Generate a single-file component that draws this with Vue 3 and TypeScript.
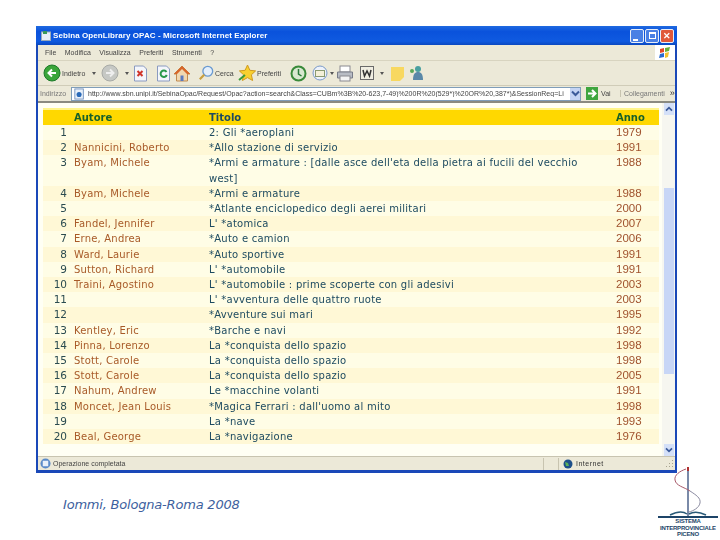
<script setup lang="ts">
interface Row { n: number; a: string; t: string; y: string }
const rows: Row[] = [
  { n: 1, a: '', t: '2: Gli *aeroplani', y: '1979' },
  { n: 2, a: 'Nannicini, Roberto', t: '*Allo stazione di servizio', y: '1991' },
  { n: 3, a: 'Byam, Michele', t: "*Armi e armature : [dalle asce dell'eta della pietra ai fucili del vecchio west]", y: '1988' },
  { n: 4, a: 'Byam, Michele', t: '*Armi e armature', y: '1988' },
  { n: 5, a: '', t: '*Atlante enciclopedico degli aerei militari', y: '2000' },
  { n: 6, a: 'Fandel, Jennifer', t: "L' *atomica", y: '2007' },
  { n: 7, a: 'Erne, Andrea', t: '*Auto e camion', y: '2006' },
  { n: 8, a: 'Ward, Laurie', t: '*Auto sportive', y: '1991' },
  { n: 9, a: 'Sutton, Richard', t: "L' *automobile", y: '1991' },
  { n: 10, a: 'Traini, Agostino', t: "L' *automobile : prime scoperte con gli adesivi", y: '2003' },
  { n: 11, a: '', t: "L' *avventura delle quattro ruote", y: '2003' },
  { n: 12, a: '', t: '*Avventure sui mari', y: '1995' },
  { n: 13, a: 'Kentley, Eric', t: '*Barche e navi', y: '1992' },
  { n: 14, a: 'Pinna, Lorenzo', t: 'La *conquista dello spazio', y: '1998' },
  { n: 15, a: 'Stott, Carole', t: 'La *conquista dello spazio', y: '1998' },
  { n: 16, a: 'Stott, Carole', t: 'La *conquista dello spazio', y: '2005' },
  { n: 17, a: 'Nahum, Andrew', t: 'Le *macchine volanti', y: '1991' },
  { n: 18, a: 'Moncet, Jean Louis', t: "*Magica Ferrari : dall'uomo al mito", y: '1998' },
  { n: 19, a: '', t: 'La *nave', y: '1993' },
  { n: 20, a: 'Beal, George', t: 'La *navigazione', y: '1976' },
]
const menu = ['File', 'Modifica', 'Visualizza', 'Preferiti', 'Strumenti', '?']
const url = 'http://www.sbn.unipi.it/SebinaOpac/Request/Opac?action=search&Class=CUBm%3B%20-623,7-49)%200R%20(529*)%20OR%20,387*)&SessionReq=Li'
</script>

<template>
  <div class="slide">
    <div class="win">
      <div class="titlebar">
        <svg class="ti" width="10" height="11" viewBox="0 0 10 11"><rect x=".5" y="2" width="9" height="8.500" fill="#e8eef8" stroke="#9ab"/><rect x="2" y="1" width="4" height="3" fill="#3a9a5a"/></svg>
        <span class="ttext">Sebina OpenLibrary OPAC - Microsoft Internet Explorer</span>
        <div class="wbtns">
          <span class="wb"><i class="mn"></i></span>
          <span class="wb"><i class="mx"></i></span>
          <span class="wb close">✕</span>
        </div>
      </div>
      <div class="inner">
        <div class="menubar">
          <span v-for="m in menu" :key="m">{{ m }}</span>
          <div class="flag">
            <svg width="14" height="14" viewBox="0 0 14 14"><path d="M2 3l4-1 0 4-4 1z" fill="#e2482a"/><path d="M7 2l5-1-1 4-4 1z" fill="#6aae3a"/><path d="M2 8l4-1 0 4-5 1z" fill="#2a6ad0"/><path d="M7 7l4-1-1 5-3 1z" fill="#f2c230"/></svg>
          </div>
        </div>
        <div class="toolbar">
          <svg class="i m5" width="18" height="18" viewBox="0 0 18 18"><circle cx="9" cy="9" r="8" fill="#3aa53a" stroke="#1d7a2a"/><path d="M13 9H6M9 5.500L5.500 9 9 12.500" fill="none" stroke="#fff" stroke-width="2"/></svg>
          <span class="tl t1">Indietro</span>
          <span class="drop m4"></span>
          <svg class="i m5" width="18" height="18" viewBox="0 0 18 18"><circle cx="9" cy="9" r="8" fill="#c6c8c4" stroke="#a8aaa6"/><path d="M5 9h7M9 5.500L12.500 9 9 12.500" fill="none" stroke="#eee" stroke-width="2"/></svg>
          <span class="drop m6"></span>
          <svg class="i m4" width="15" height="17" viewBox="0 0 15 17"><path d="M1.500 1h9l3 3v12h-12z" fill="#f4f6fb" stroke="#8a9ac0"/><path d="M4.500 6l5 5M9.500 6l-5 5" stroke="#d0352a" stroke-width="2"/></svg>
          <svg class="i m8" width="15" height="17" viewBox="0 0 15 17"><path d="M1.500 1h9l3 3v12h-12z" fill="#f4f6fb" stroke="#8a9ac0"/><path d="M10.500 7a3.200 3.200 0 1 0 .3 3" fill="none" stroke="#2a9a4a" stroke-width="2"/></svg>
          <svg class="i m2" width="18" height="17" viewBox="0 0 18 17"><path d="M9 1L1 9h2.500v7h11V9H17z" fill="#f0d8b0" stroke="#c08a50"/><path d="M9 1L1 9h3l5-5 5 5h3z" fill="#d8662a"/><rect x="7.500" y="10.500" width="3" height="5.500" fill="#5a7ac0"/></svg>
          <svg class="i m7" width="16" height="18" viewBox="0 0 18 18"><circle cx="11" cy="7" r="5.500" fill="#e4effb" stroke="#6a9ad0" stroke-width="1.500"/><path d="M7 11l-5 5" stroke="#c8a040" stroke-width="2.500"/></svg>
          <span class="tl t2">Cerca</span>
          <svg class="i m5" width="19" height="18" viewBox="0 0 19 18"><path d="M9.500 1l2.400 5.300 5.700.6-4.200 3.900 1.200 5.700-5.100-2.900-5.100 2.900 1.200-5.700L1.400 6.900l5.700-.6z" fill="#f8d030" stroke="#d09a20"/><path d="M1 16l6-5" stroke="#3a9a3a" stroke-width="2"/></svg>
          <span class="tl t3">Preferiti</span>
          <svg class="i m6" width="17" height="17" viewBox="0 0 17 17"><circle cx="8.500" cy="8.500" r="7" fill="#d8e8d0" stroke="#3a8a3a" stroke-width="2"/><path d="M8.500 4v5l3 2" fill="none" stroke="#2a7a3a" stroke-width="1.500"/></svg>
          <svg class="i m5" width="17" height="17" viewBox="0 0 17 17"><circle cx="8" cy="8" r="7" fill="#eef2fa" stroke="#7a9ac8"/><rect x="3.500" y="5.500" width="9" height="6" fill="#f4f0d8" stroke="#8a9a70"/></svg>
          <span class="drop m1"></span>
          <svg class="i m2" width="18" height="17" viewBox="0 0 18 17"><rect x="4" y="1" width="10" height="6" fill="#fff" stroke="#8a8a90"/><path d="M1.500 7h15v6h-15z" fill="#b8bcc4" stroke="#787c88"/><rect x="4" y="11" width="10" height="5" fill="#f4f4f4" stroke="#8a8a90"/></svg>
          <svg class="i m6" width="14" height="14" viewBox="0 0 14 14"><rect x=".5" y=".5" width="13" height="13" fill="#f0eee2" stroke="#6a6a6a"/><path d="M3 4l1.500 6L7 5l2.500 5L11 4" fill="none" stroke="#333" stroke-width="1.500"/></svg>
          <span class="drop m6"></span>
          <svg class="i m7" width="13" height="15" viewBox="0 0 13 15"><path d="M0 1h13v10l-4 4H0z" fill="#f8d860"/></svg>
          <svg class="i m4" width="17" height="16" viewBox="0 0 17 16"><circle cx="10" cy="4" r="3" fill="#4aa0a0"/><path d="M5 15c0-6 2-8 5-8s5 2 5 8z" fill="#5a88a8"/><circle cx="4" cy="6" r="2" fill="#5aa85a"/></svg>
        </div>
        <div class="addr">
          <span class="alabel">Indirizzo</span>
          <div class="afield">
            <svg class="aicon" width="11" height="12" viewBox="0 0 13 13"><rect x="1" y=".5" width="10" height="12" fill="#e8f0fa" stroke="#6a8ab8"/><circle cx="6" cy="7" r="3" fill="#2a6ab8"/></svg>
            <span class="url">{{ url }}</span>
            <span class="combo"><svg width="9" height="7" viewBox="0 0 9 7"><path d="M1 1.500l3.500 3.500L8 1.500" fill="none" stroke="#3a5a9a" stroke-width="2"/></svg></span>
          </div>
          <svg class="go" width="12" height="13" viewBox="0 0 12 13"><rect width="12" height="13" fill="#3fa63f"/><path d="M2 6.500h7M6 3l3.500 3.500L6 10" fill="none" stroke="#fff" stroke-width="2"/></svg>
          <span class="vai">Vai</span>
          <span class="links">Collegamenti</span>
          <span class="more">»</span>
        </div>
        <div class="viewport">
          <div class="page">
            <div class="thead">
              <span class="cn"></span><span class="ca">Autore</span><span class="ct">Titolo</span><span class="cy">Anno</span>
            </div>
            <div v-for="r in rows" :key="r.n" class="row" :class="{ even: r.n % 2 === 0 }">
              <span class="cn">{{ r.n }}</span>
              <span class="ca">{{ r.a }}</span>
              <span class="ct">{{ r.t }}</span>
              <span class="cy">{{ r.y }}</span>
            </div>
          </div>
          <div class="scroll">
            <span class="sb"><svg width="8" height="6" viewBox="0 0 9 7"><path d="M1 5.500l3.500-3.500L8 5.500" fill="none" stroke="#3a5a9a" stroke-width="2"/></svg></span>
            <div class="track"><div class="thumb"></div></div>
            <span class="sb"><svg width="8" height="6" viewBox="0 0 9 7"><path d="M1 1.500l3.500 3.500L8 1.500" fill="none" stroke="#3a5a9a" stroke-width="2"/></svg></span>
          </div>
        </div>
        <div class="status">
          <svg width="11" height="11" viewBox="0 0 12 12"><circle cx="6" cy="6" r="5.500" fill="#5a8ac8"/><rect x="3" y="3" width="6" height="6" fill="#e8f0fa"/></svg>
          <span class="stext">Operazione completata</span>
          <div class="sright">
            <span class="sep"></span>
            <span class="sep s2"></span>
            <svg width="10" height="10" viewBox="0 0 10 10"><circle cx="5" cy="5" r="4.500" fill="#1d4f8a"/><path d="M2 3l3 1 1 3-3 0z" fill="#5ab05a"/></svg>
            <span class="inet">Internet</span>
            <svg class="grip" width="9" height="9" viewBox="0 0 9 9"><path d="M7 1h1v1H7zM4 4h1v1H4zM7 4h1v1H7zM1 7h1v1H1zM4 7h1v1H4zM7 7h1v1H7z" fill="#a8a490"/></svg>
          </div>
        </div>
      </div>
    </div>
    <p class="caption">Iommi, Bologna-Roma 2008</p>
    <div class="logo">
      <svg width="60" height="52" viewBox="0 0 60 52">
        <rect x="29" y="1" width="2" height="49" fill="#7a8aa8"/>
        <rect x="29" y="1" width="2" height="4" fill="#b03030"/>
        <path d="M28 3C22 5 16 9 17 14c1 6 9 7 15 11" fill="none" stroke="#a85a6a" stroke-width="1"/>
        <path d="M32 25c6 4 11 7 10 12-1 5-7 8-11 9" fill="none" stroke="#8a8aa0" stroke-width="1"/>
        <path d="M12 49c6-3 13-4 17-1M31 48c5-3 11-2 17 1" fill="none" stroke="#2a5a78" stroke-width="1.500"/>
        <rect x="0" y="50" width="60" height="2" fill="#1d4468"/>
      </svg>
      <div class="ltext">SISTEMA<br />INTERPROVINCIALE<br />PICENO</div>
    </div>
  </div>
</template>

<style scoped>
.slide { width: 720px; height: 540px; box-sizing: border-box; padding: 26px 0 0 36px; position: relative; overflow: hidden; background: #fff; font-family: "DejaVu Sans", sans-serif; }
.win { width: 641px; height: 447px; box-sizing: border-box; display: flex; flex-direction: column; background: #1a48b8; border-radius: 3px 3px 0 0; filter: blur(.3px); }
.titlebar { height: 19px; flex: none; display: flex; align-items: center; padding-left: 5px; background: linear-gradient(#1f6ae0, #0a52dc 30%, #0f5ae0 80%, #0a48c0); }
.ti { flex: none; margin-right: 2px; }
.ttext { color: #fff; font: bold 8px/1 "Liberation Sans", sans-serif; letter-spacing: .08px; white-space: nowrap; }
.wbtns { margin-left: auto; display: flex; gap: 1px; padding-right: 3px; }
.wb { width: 14px; height: 14px; border: 1px solid #e8eef8; border-radius: 2px; background: #4a80e4; position: relative; display: block; box-sizing: border-box; }
.wb i { position: absolute; display: block; }
.mn { left: 2px; bottom: 1px; width: 5px; height: 2px; background: #fff; }
.mx { left: 3px; top: 2px; width: 7px; height: 7px; box-sizing: border-box; border: 1px solid #fff; border-top-width: 2px; }
.close { background: #e0583a; color: #fff; font: bold 9px/12px "Liberation Sans", sans-serif; text-align: center; }
.inner { flex: 1; min-height: 0; margin: 0 2px 3px 2px; display: flex; flex-direction: column; background: #ece9d8; }
.menubar { height: 15px; flex: none; display: flex; align-items: center; padding-left: 7px; gap: 8.500px; font: 7px/1 "Liberation Sans", sans-serif; color: #444; border-bottom: 1px solid #d8d4c0; }
.flag { margin-left: auto; align-self: stretch; width: 20px; background: #fff; display: flex; align-items: center; justify-content: center; }
.toolbar { height: 24px; flex: none; display: flex; align-items: center; border-bottom: 1px solid #d0ccb8; }
.i { flex: none; }
.m1 { margin-left: 1px; } .m2 { margin-left: 2px; } .m4 { margin-left: 4px; } .m5 { margin-left: 5px; } .m6 { margin-left: 6px; } .m7 { margin-left: 7px; } .m8 { margin-left: 8px; }
.tl { font: 7px/1 "Liberation Sans", sans-serif; color: #444; white-space: nowrap; flex: none; }
.t1 { margin-left: 1px; width: 26px; }
.t2 { margin-left: 1px; width: 18px; }
.t3 { width: 27px; }
.drop { width: 0; height: 0; flex: none; border: 2px solid transparent; border-top: 3px solid #555; border-bottom: 0; }
.addr { height: 17px; flex: none; display: flex; align-items: center; padding-left: 2px; border-bottom: 2px solid #8a8a80; box-sizing: border-box; }
.alabel { font: 7px/1 "Liberation Sans", sans-serif; color: #777; width: 31px; flex: none; }
.afield { width: 510px; height: 14px; flex: none; box-sizing: border-box; background: #fff; border: 1px solid #7f9db9; display: flex; align-items: center; overflow: hidden; padding-left: 2px; }
.aicon { flex: none; margin-right: 3px; }
.url { flex: 1; min-width: 0; white-space: nowrap; overflow: hidden; font: 7px/1 "Liberation Sans", sans-serif; color: #444; }
.combo { width: 10px; height: 12px; flex: none; background: #c4d4f4; display: flex; align-items: center; justify-content: center; }
.go { flex: none; margin-left: 5px; }
.vai { font: 7px/1 "Liberation Sans", sans-serif; color: #444; margin-left: 3px; width: 17px; flex: none; }
.links { font: 7px/1 "Liberation Sans", sans-serif; color: #777; margin-left: 2px; padding-left: 3px; border-left: 1px solid #c8c4b0; white-space: nowrap; flex: none; }
.more { font: 9px/1 "Liberation Sans", sans-serif; color: #333; margin-left: 5px; }
.viewport { flex: 1; min-height: 0; display: flex; background: #fff; }
.page { flex: 1; min-width: 0; padding: 7px 3px 0 5px; background: #fffff4; font: 10px/15.200px "DejaVu Sans", sans-serif; color: #1d4a55; box-shadow: inset 0 5px 0 #fffff4; }
.thead, .row { display: grid; grid-template-columns: 24px 142px 407px 1fr; }
.thead { height: 15px; background: #ffd800; color: #17602a; font-weight: bold; align-items: center; box-shadow: 0 -2px 0 #fff58a; }
.row { background: #fffde6; }
.row.even { background: #fff8d6; }
.cn { text-align: right; color: #2b4b50; font-size: 10.500px; }
.ca { padding-left: 7px; color: #a85a28; white-space: nowrap; letter-spacing: .2px; }
.thead .ca { color: #17602a; letter-spacing: 0; }
.ct { color: #1d4a60; }
.row .ct { padding-right: 30px; letter-spacing: .25px; }
.cy { font-family: "Liberation Sans", sans-serif; font-size: 11.500px; color: #a0522d; }
.thead .cy { color: #17602a; font-family: "DejaVu Sans", sans-serif; font-size: 10px; }
.scroll { width: 13px; flex: none; box-sizing: border-box; padding: 0 1px 0 2px; display: flex; flex-direction: column; background: #f6f6f0; }
.sb { height: 12px; flex: none; background: #d4e0f8; display: flex; align-items: center; justify-content: center; }
.track { flex: 1; min-height: 0; padding-top: 73px; }
.thumb { height: 186px; background: #c8d6f6; }
.status { height: 14px; flex: none; display: flex; align-items: center; padding-left: 2px; border-top: 1px solid #c8c4b0; box-sizing: border-box; gap: 2px; }
.stext { font: 7px/1 "Liberation Sans", sans-serif; color: #444; }
.sright { margin-left: auto; display: flex; align-items: center; gap: 3px; }
.sep { width: 1px; height: 12px; background: #c8c4b0; margin-right: 11px; }
.s2 { margin-right: 1px; }
.inet { font: 7px/1 "Liberation Sans", sans-serif; color: #333; letter-spacing: .5px; width: 28px; }
.grip { margin-left: 58px; margin-right: 1px; }
.caption { margin: 0; position: absolute; left: 63px; top: 497px; font: italic 13px/16px "DejaVu Sans", sans-serif; letter-spacing: -.2px; color: #3d5f9e; }
.logo { position: absolute; left: 658px; top: 466px; width: 60px; text-align: center; }
.logo svg { display: block; }
.ltext { font: bold 6px/6.500px "Liberation Sans", sans-serif; color: #1d4468; white-space: nowrap; letter-spacing: -.2px; }
</style>
